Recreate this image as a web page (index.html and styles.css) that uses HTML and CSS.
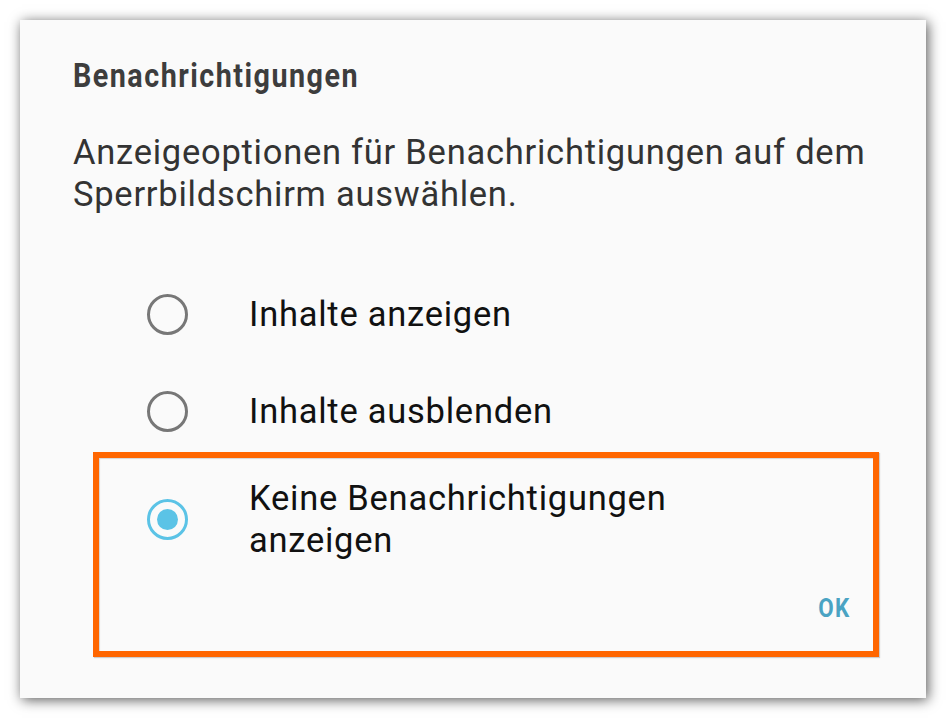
FILE: index.html
```html
<!DOCTYPE html>
<html lang="de">
<head>
<meta charset="utf-8">
<title>Benachrichtigungen</title>
<link rel="stylesheet" href="styles.css">
</head>
<body>
<div class="dialog">
  <h1 class="title"><span class="title-text">Benachrichtigungen</span></h1>
  <p class="message">Anzeigeoptionen für Benachrichtigungen auf dem Sperrbildschirm auswählen.</p>
  <div class="options">
    <div class="option">
      <span class="radio"></span>
      <span class="label">Inhalte anzeigen</span>
    </div>
    <div class="option option-second">
      <span class="radio"></span>
      <span class="label">Inhalte ausblenden</span>
    </div>
    <div class="highlight">
      <div class="option option-selected">
        <span class="radio radio-on"><span class="dot"></span></span>
        <span class="label label-wrap">Keine Benachrichtigungen anzeigen</span>
      </div>
      <div class="actions">
        <span class="ok">OK</span>
      </div>
    </div>
  </div>
</div>
</body>
</html>
```
FILE: styles.css
```css
html, body {
  margin: 0;
  padding: 0;
  background: #ffffff;
}

body {
  font-family: Roboto, "Noto Sans", "Liberation Sans", sans-serif;
}

.dialog {
  margin: 20px;
  width: 906px;
  height: 678px;
  box-sizing: border-box;
  background: #fafafa;
  box-shadow: 2px 2px 12px rgba(0, 0, 0, 0.65);
  padding: 36px 0 0 53px;
}

.title {
  margin: 0;
  font-size: 33px;
  line-height: 40px;
  font-weight: 700;
  color: #3d3d3d;
}

.title-text {
  display: inline-block;
  letter-spacing: 1.7px;
  transform: scaleX(0.87);
  transform-origin: left center;
}

.message {
  margin: 35px 0 0 0;
  font-size: 34.5px;
  line-height: 42px;
  letter-spacing: 0.75px;
  color: #333333;
  width: 830px;
}

.options {
  margin-top: 78px;
}

.option {
  display: flex;
  align-items: center;
  padding-left: 74px;
}

.option-second {
  margin-top: 55px;
}

.radio {
  flex: none;
  width: 41px;
  height: 41px;
  box-sizing: border-box;
  border: 3px solid #777777;
  border-radius: 50%;
  display: flex;
  align-items: center;
  justify-content: center;
  margin-right: 61px;
}

.radio-on {
  border-color: #5bc3e6;
}

.dot {
  width: 21px;
  height: 21px;
  border-radius: 50%;
  background: #5bc3e6;
}

.label {
  font-size: 34.5px;
  line-height: 42px;
  letter-spacing: 0.75px;
  color: #111111;
}

.label-wrap {
  width: 470px;
}

.highlight {
  margin: 20px 0 0 20px;
  width: 786px;
  height: 205px;
  box-sizing: border-box;
  border: 6px solid #ff6600;
  box-shadow: 1px 1px 1px rgba(0, 0, 0, 0.18), inset 1px 1px 1px rgba(0, 0, 0, 0.15);
  padding-top: 19px;
}

.option-selected {
  padding-left: 48px;
}

.actions {
  display: flex;
  justify-content: flex-end;
  padding-right: 23px;
  margin-top: 32px;
}

.ok {
  display: inline-block;
  font-size: 26px;
  line-height: 30px;
  font-weight: 700;
  letter-spacing: 1.5px;
  color: #4aa3c3;
  transform: scaleX(0.86);
  transform-origin: right center;
}
```
